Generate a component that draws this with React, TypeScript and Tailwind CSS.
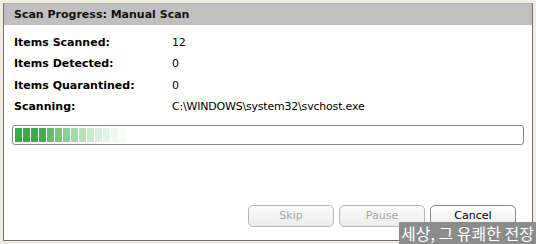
const rows = [
  { label: "Items Scanned:", value: "12" },
  { label: "Items Detected:", value: "0" },
  { label: "Items Quarantined:", value: "0" },
  { label: "Scanning:", value: "C:\\WINDOWS\\system32\\svchost.exe" },
];

const segments = [
  "bg-[#36ad44]",
  "bg-[#36ad44]",
  "bg-[#38ae46]",
  "bg-[#3db14b]",
  "bg-[#5fbf6a]",
  "bg-[#76c880]",
  "bg-[#8ad193]",
  "bg-[#a0daa7]",
  "bg-[#b4e2b9]",
  "bg-[#c6eaca]",
  "bg-[#d6f0d9]",
  "bg-[#e3f5e5]",
  "bg-[#eef9ef]",
  "bg-[#f6fcf7]",
];

const App = () => {
  return (
    <div className="w-[536px] h-[244px] bg-[#f0eee0] p-[3px] relative font-['Tahoma','DejaVu_Sans',sans-serif] text-[11px] text-black">
      <div className="w-full h-full bg-white border border-[#707070] border-t-[#b0b0b0] flex flex-col">
        <div className="h-[21px] bg-[#c0c0c0] flex items-center pl-[10px] pt-[1px] font-bold text-[#111]">
          Scan Progress: Manual Scan
        </div>
        <div className="flex flex-col pl-[10px] pt-[11px] gap-[7.5px]">
          {rows.map((r) => (
            <div key={r.label} className="flex h-[14px] items-center">
              <span className="w-[158px] font-bold">{r.label}</span>
              <span className="tracking-[-0.2px]">{r.value}</span>
            </div>
          ))}
        </div>
        <div className="mx-[8px] mt-[10px] h-[20px] border border-[#8a8a8a] rounded-[3px] flex items-center gap-[1px] px-[2px]">
          {segments.map((c, i) => (
            <div key={i} className={`w-[7px] h-[14px] ${c}`} />
          ))}
        </div>
        <div className="flex-1" />
        <div className="flex justify-end gap-[5px] pr-[16px] pb-[13px]">
          <button className="w-[86px] h-[22px] rounded-[5px] border border-[#b8b8b8] bg-gradient-to-b from-[#fbfbfb] to-[#ececec] text-[#a8a8a8]">
            Skip
          </button>
          <button className="w-[86px] h-[22px] rounded-[5px] border border-[#b8b8b8] bg-gradient-to-b from-[#fbfbfb] to-[#ececec] text-[#a8a8a8]">
            Pause
          </button>
          <button className="w-[86px] h-[22px] rounded-[5px] border border-[#8a8a8a] bg-gradient-to-b from-[#ffffff] to-[#ececec] text-black">
            Cancel
          </button>
        </div>
      </div>
      <div className="absolute right-0 bottom-0 h-[22px] bg-[#8c8c8c] text-white text-[16px] leading-[22px] px-[2px] font-['Noto_Sans_CJK_KR',sans-serif]">
        세상, 그 유쾌한 전장
      </div>
    </div>
  );
};

export default App;
